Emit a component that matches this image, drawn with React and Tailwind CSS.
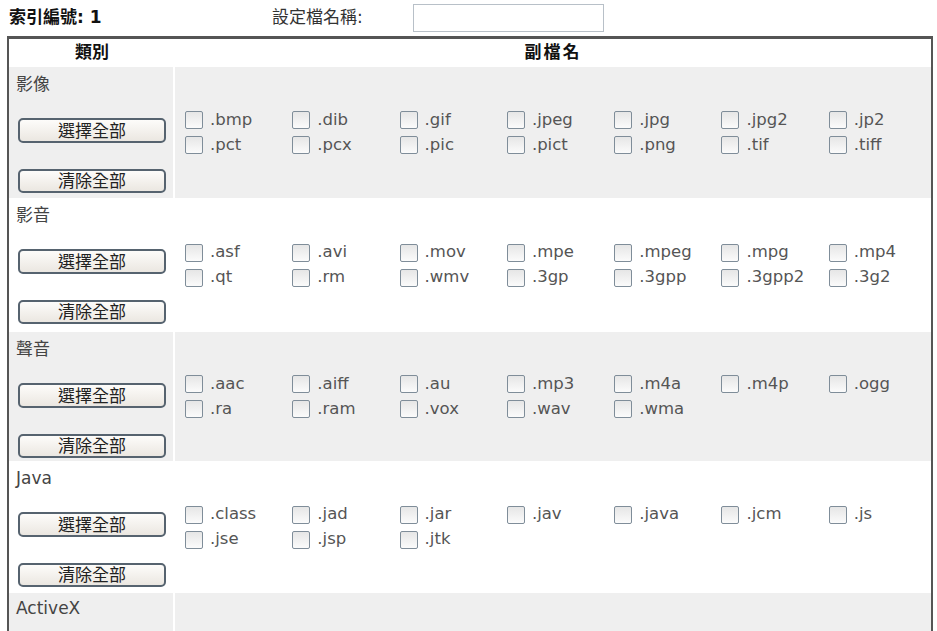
import React from 'react';

const sections = [
  {
    name: '影像', bg: 'bg-[#efefef]', h: 'h-[131px]',
    exts: ['.bmp', '.dib', '.gif', '.jpeg', '.jpg', '.jpg2', '.jp2', '.pct', '.pcx', '.pic', '.pict', '.png', '.tif', '.tiff'],
  },
  {
    name: '影音', bg: 'bg-white', h: 'h-[134px]',
    exts: ['.asf', '.avi', '.mov', '.mpe', '.mpeg', '.mpg', '.mp4', '.qt', '.rm', '.wmv', '.3gp', '.3gpp', '.3gpp2', '.3g2'],
  },
  {
    name: '聲音', bg: 'bg-[#efefef]', h: 'h-[129px]',
    exts: ['.aac', '.aiff', '.au', '.mp3', '.m4a', '.m4p', '.ogg', '.ra', '.ram', '.vox', '.wav', '.wma'],
  },
  {
    name: 'Java', bg: 'bg-white', h: 'h-[132px]',
    exts: ['.class', '.jad', '.jar', '.jav', '.java', '.jcm', '.js', '.jse', '.jsp', '.jtk'],
  },
];

const font = "font-['DejaVu_Sans','Noto_Sans_CJK_TC',sans-serif]";

function Button({ children, className = '' }) {
  return (
    <button className={`block w-[148px] ml-[9px] rounded-[5px] border-2 border-[#56636f] bg-gradient-to-b from-[#fdfcfa] to-[#ebe7e1] text-[17px] leading-[20px] text-[#222] ${className}`}>
      {children}
    </button>
  );
}

function Check({ label }) {
  return (
    <label className="flex items-center h-[25px] text-[16.5px] text-[#555]">
      <span className="w-[18px] h-[18px] mr-[7px] border border-[#7f8d99] rounded-[2px] bg-gradient-to-b from-[#e6e6e6] to-[#fbfbfb] shrink-0" />
      {label}
    </label>
  );
}

function Section({ s }) {
  return (
    <div className={`flex ${s.h} ${s.bg}`}>
      <div className="w-[164px] shrink-0 pt-[5px]">
        <div className="pl-[7px] text-[17px] leading-[24px] text-[#444]">{s.name}</div>
        <Button className="mt-[22px] h-[25px]">選擇全部</Button>
        <Button className="mt-[26px] h-[24px]">清除全部</Button>
      </div>
      <div className="w-[2px] shrink-0 bg-white" />
      <div className="flex-1 min-w-0 flex items-center pl-[10px]">
        <div className="grid grid-cols-[repeat(6,107.3px)_auto]">
          {s.exts.map(e => <Check key={e} label={e} />)}
        </div>
      </div>
    </div>
  );
}

export default function App() {
  return (
    <div className={`w-[937px] h-[631px] overflow-hidden bg-white ${font}`}>
      {/* Top line */}
      <div className="flex items-center h-[36px]">
        <div className="ml-[9px] w-[263px] text-[17px] font-bold text-[#111]">索引編號: 1</div>
        <div className="w-[141px] text-[17px] text-[#333]">設定檔名稱:</div>
        <input className="w-[191px] h-[28px] border border-[#b8c0c8] bg-white outline-none" />
      </div>

      {/* Table */}
      <div className="ml-[7px] w-[926px] border-x-2 border-t-[3px] border-[#555]">
        <div className="flex h-[28px] items-center bg-white text-[17px] font-bold text-[#111]">
          <div className="w-[166px] shrink-0 text-center">類別</div>
          <div className="flex-1 text-center tracking-[2px]">副檔名</div>
        </div>
        {sections.map(s => <Section key={s.name} s={s} />)}
        <div className="flex h-[60px] bg-[#efefef]">
          <div className="w-[164px] shrink-0 pt-[3px] pl-[7px] text-[17px] leading-[24px] text-[#444]">ActiveX</div>
          <div className="w-[2px] shrink-0 bg-white" />
          <div className="flex-1" />
        </div>
      </div>
    </div>
  );
}
